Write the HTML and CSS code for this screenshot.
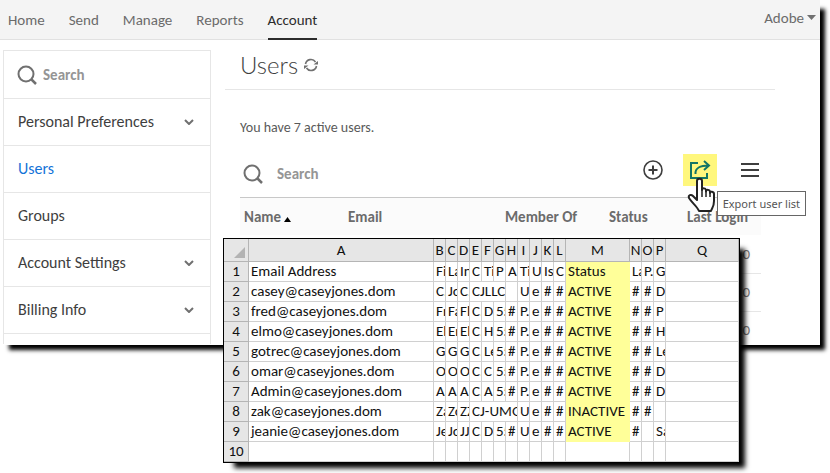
FILE: index.html
```html
<!DOCTYPE html>
<html lang="en">
<head>
<meta charset="utf-8">
<title>Users</title>
<link rel="stylesheet" href="styles.css">
</head>
<body>
<div class="window">
  <header class="topbar">
    <nav class="tabs">
      <a href="#">Home</a><a href="#">Send</a><a href="#">Manage</a><a href="#">Reports</a><a href="#" class="current">Account</a>
    </nav>
    <button class="profile">Adobe<svg width="10" height="6" viewBox="0 0 10 6"><path d="M0 0h9L4.500 5z" fill="#707070"/></svg></button>
  </header>
  <div class="body">
    <aside class="sidebar">
      <label class="side-search">
        <svg width="20" height="20" viewBox="0 0 20 20" fill="none" stroke="#707070" stroke-width="2"><circle cx="9" cy="9" r="7.500"/><path d="M14 14l5 5" stroke-width="2.500"/></svg>
        <input type="search" placeholder="Search" aria-label="Search menu">
      </label>
      <a href="#">Personal Preferences<svg class="chev" viewBox="0 0 10 6"><path d="M1 1l4 4 4-4"/></svg></a>
      <a href="#" class="selected">Users</a>
      <a href="#">Groups</a>
      <a href="#">Account Settings<svg class="chev" viewBox="0 0 10 6"><path d="M1 1l4 4 4-4"/></svg></a>
      <a href="#">Billing Info<svg class="chev" viewBox="0 0 10 6"><path d="M1 1l4 4 4-4"/></svg></a>
    </aside>
    <main class="content">
      <div class="title">
        <h1>Users</h1>
        <button aria-label="Refresh"><svg width="14" height="14" viewBox="0 0 14 14"><g fill="none" stroke="#707070" stroke-width="1.600"><path d="M1.500 6A5.500 5.500 0 0 1 11.500 4"/><path d="M12.500 8A5.500 5.500 0 0 1 2.500 10"/></g><path d="M9.500 6.500h4.500V3zM0 11V7.500h4.500z" fill="#707070"/></svg></button>
      </div>
      <div class="panel">
        <p class="summary">You have 7 active users.</p>
        <div class="toolbar">
          <label class="user-search">
            <svg width="20" height="20" viewBox="0 0 20 20" fill="none" stroke="#707070" stroke-width="2"><circle cx="9" cy="9" r="7.500"/><path d="M14 14l5 5" stroke-width="2.500"/></svg>
            <input type="search" placeholder="Search" aria-label="Search users">
          </label>
          <button aria-label="Add user"><svg width="20" height="20" viewBox="0 0 20 20" fill="none" stroke="#3e3e3e" stroke-width="1.600"><circle cx="10" cy="10" r="9"/><path d="M10 5.500v9M5.500 10h9" stroke-width="2"/></svg></button>
          <button class="export" aria-label="Export user list"><svg width="22" height="20" viewBox="0 0 22 20" fill="none" stroke="#137565" stroke-width="2"><path d="M9 3H2v15h16v-5M6.500 14C6 8 11 5.500 20 5.500M15 1l5 4.500-5 4.500"/></svg></button>
          <button aria-label="More"><svg width="18" height="16" viewBox="0 0 18 16" stroke="#3e3e3e" stroke-width="2"><path d="M0 2h18M0 8h18M0 14h18"/></svg></button>
          <svg class="hand" viewBox="0 0 28 36"><path d="M10 20V4c0-3 5-3 5 0v9c0-2.500 4-2 4 .5v1c0-2.500 4-2 4 .5v1c0-2 4-1.500 4 1v7c0 6-2 7-3 10H12C10 29 5 26 2 21c-1-3 2-4 4-2l4 4z" fill="#fff" stroke="#222" stroke-width="2" stroke-linejoin="round"/><path d="M15 12v8M19 14v6M23 15v5" stroke="#222" stroke-width="1.500"/></svg>
          <div class="tooltip" role="tooltip">Export user list</div>
        </div>
        <table class="users">
          <colgroup><col class="c-name"><col class="c-email"><col class="c-member"><col class="c-status"><col></colgroup>
          <thead><tr><th>Name <svg width="7" height="5" viewBox="0 0 7 5"><path d="M0 5L3.500 0 7 5z"/></svg></th><th>Email</th><th>Member Of</th><th>Status</th><th>Last Login</th></tr></thead>
          <tbody>
            <tr><td></td><td></td><td></td><td></td><td>0</td></tr>
            <tr><td></td><td></td><td></td><td></td><td>0</td></tr>
            <tr><td></td><td></td><td></td><td></td><td>0</td></tr>
          </tbody>
        </table>
      </div>
    </main>
  </div>
</div>

<div class="sheet">
<table>
<colgroup><col class="rownum"><col class="wide"><col span="11" class="thin"><col class="state"><col span="3" class="thin"><col></colgroup>
<thead><tr><th><svg width="11" height="11" viewBox="0 0 11 11"><path d="M11 0v11H0z" fill="#b3b3b3"/></svg></th><th>A</th><th>B</th><th>C</th><th>D</th><th>E</th><th>F</th><th>G</th><th>H</th><th>I</th><th>J</th><th>K</th><th>L</th><th>M</th><th>N</th><th>O</th><th>P</th><th>Q</th></tr></thead>
<tbody>
<tr><th>1</th><td>Email Address</td><td>Fi</td><td>La</td><td>In</td><td>C</td><td>Ti</td><td>P</td><td>A</td><td>Ti</td><td>U</td><td>Is</td><td>C</td><td class="hl">Status</td><td>La</td><td>P.</td><td>G</td><td></td></tr>
<tr><th>2</th><td>casey@caseyjones.dom</td><td>C.</td><td>Jo</td><td>C.</td><td colspan="3">CJLLC</td><td></td><td>U</td><td>e</td><td>#</td><td>#</td><td class="hl">ACTIVE</td><td>#</td><td>#</td><td>D</td><td></td></tr>
<tr><th>3</th><td>fred@caseyjones.dom</td><td>Fr</td><td>Fa</td><td>Fl</td><td>C.</td><td>D</td><td>55</td><td>#</td><td>P.</td><td>e</td><td>#</td><td>#</td><td class="hl">ACTIVE</td><td>#</td><td>#</td><td>P</td><td></td></tr>
<tr><th>4</th><td>elmo@caseyjones.dom</td><td>El</td><td>Er</td><td>El</td><td>C.</td><td>H</td><td>55</td><td>#</td><td>P.</td><td>e</td><td>#</td><td>#</td><td class="hl">ACTIVE</td><td>#</td><td>#</td><td>H</td><td></td></tr>
<tr><th>5</th><td>gotrec@caseyjones.dom</td><td>G</td><td>G</td><td>G</td><td>C.</td><td>Le</td><td>55</td><td>#</td><td>P.</td><td>e</td><td>#</td><td>#</td><td class="hl">ACTIVE</td><td>#</td><td>#</td><td>Le</td><td></td></tr>
<tr><th>6</th><td>omar@caseyjones.dom</td><td>O</td><td>O</td><td>O</td><td>C.</td><td>C</td><td>55</td><td>#</td><td>P.</td><td>e</td><td>#</td><td>#</td><td class="hl">ACTIVE</td><td>#</td><td>#</td><td>D</td><td></td></tr>
<tr><th>7</th><td>Admin@caseyjones.dom</td><td>A</td><td>A</td><td>A</td><td>C.</td><td>A</td><td>55</td><td>#</td><td>P.</td><td>e</td><td>#</td><td>#</td><td class="hl">ACTIVE</td><td>#</td><td>#</td><td>D</td><td></td></tr>
<tr><th>8</th><td>zak@caseyjones.dom</td><td>Za</td><td>Zo</td><td>ZZ</td><td colspan="4">CJ-UMG</td><td>U</td><td>e</td><td>#</td><td>#</td><td class="hl">INACTIVE</td><td>#</td><td>#</td><td></td><td></td></tr>
<tr><th>9</th><td>jeanie@caseyjones.dom</td><td>Je</td><td>Jo</td><td>JJ</td><td>C.</td><td>D</td><td>55</td><td>#</td><td>U</td><td>e</td><td>#</td><td>#</td><td class="hl">ACTIVE</td><td>#</td><td></td><td>Sa</td><td></td></tr>
<tr><th>10</th><td></td><td></td><td></td><td></td><td></td><td></td><td></td><td></td><td></td><td></td><td></td><td></td><td></td><td></td><td></td><td></td><td></td></tr>
</tbody>
</table>
</div>
</body>
</html>
```
FILE: styles.css
```css
* { box-sizing: border-box; }
body {
  margin: 0;
  min-height: 100vh;
  overflow: hidden;
  position: relative;
  background: #fff;
  color: #3e3e3e;
  font: 16px/20px Carlito, Lato, sans-serif;
}
a { color: inherit; text-decoration: none; }
button { border: 0; padding: 0; background: none; font: inherit; color: inherit; display: flex; align-items: center; }
svg { flex: none; }
input {
  border: 0; padding: 0; outline: 0; background: none;
  width: 100%; min-width: 0;
  font: bold 15px/20px Carlito, Lato, sans-serif;
}
input::placeholder { color: #959595; opacity: 1; }

.window {
  margin-right: 10px;
  background: #fff;
  box-shadow: 7px 7px 4px -2px #000;
}
.topbar {
  display: flex;
  justify-content: space-between;
  height: 40px;
  padding: 0 3px 0 8px;
  background: #f4f4f4;
  border-bottom: 1px solid #e1e1e1;
  color: #6b6b6b;
  font-size: 15px;
}
.tabs { display: flex; gap: 24px; }
.tabs a { padding-top: 10px; height: 40px; }
.tabs .current { color: #2c2c2c; border-bottom: 2px solid #2c2c2c; }
.profile { height: 36px; gap: 3px; }

.body { display: flex; align-items: flex-start; height: 305px; overflow: hidden; }
.sidebar {
  width: 208px;
  flex: none;
  margin: 10px 0 0 3px;
  padding-bottom: 10px;
  border: 1px solid #e6e6e6;
  border-bottom: 0;
}
.side-search, .sidebar a {
  display: flex;
  align-items: center;
  height: 47px;
  padding: 0 16px 0 14px;
  border-bottom: 1px solid #e6e6e6;
}
.side-search { height: 48px; gap: 6px; padding-left: 13px; }
.sidebar a { justify-content: space-between; }
.sidebar .selected { color: #1473d8; }
.chev { width: 10px; height: 6px; fill: none; stroke: #707070; stroke-width: 2; }

.content { flex: 1; min-width: 0; margin: 0 45px 0 14px; }
.title {
  display: flex;
  align-items: center;
  gap: 6px;
  height: 50px;
  padding-left: 15px;
  border-bottom: 1px solid #e6e6e6;
}
.title h1 { margin: 0; font: 300 24px/30px Lato, sans-serif; }
.panel { margin: 0 14px 0 15px; }
.summary { margin: 0; padding: 28px 0 12px; font-size: 14px; color: #5a5a5a; }
.toolbar {
  position: relative;
  display: flex;
  align-items: center;
  height: 48px;
  padding-right: 2px;
  gap: 20px;
  border-bottom: 1px solid #c8c8c8;
}
.user-search { flex: 1; display: flex; align-items: center; gap: 14px; padding-left: 3px; }
.toolbar > button { height: 32px; margin-bottom: 8px; }
.toolbar .export { width: 34px; justify-content: center; background: #fff77d; }
.toolbar button:last-of-type { margin-left: 4px; }
.hand { position: absolute; z-index: 2; right: 46px; top: 27px; width: 28px; height: 36px; }
.tooltip {
  position: absolute;
  z-index: 1;
  right: -45px;
  top: 41px;
  padding: 1px 5px;
  border: 1px solid #666;
  background: #fff;
  color: #555;
  font: 11px/21px "Noto Sans", sans-serif;
  white-space: nowrap;
}
.users { width: 100%; table-layout: fixed; border-collapse: collapse; font-size: 15px; }
.users .c-name { width: 104px; }
.users .c-email { width: 157px; }
.users .c-member { width: 104px; }
.users .c-status { width: 78px; }
.users th { height: 37px; padding: 0 4px; background: #fbfbfb; color: #6b6b6b; text-align: left; white-space: nowrap; }
.users td { height: 38px; padding: 0 11px; border-bottom: 1px solid #e6e6e6; color: #777; text-align: right; }

.sheet {
  position: absolute;
  z-index: 3;
  left: 223px;
  top: 238px;
  width: 517px;
  border: 1px solid #000;
  background: #fff;
  box-shadow: 8px 8px 5px -3px #000;
  color: #111;
}
.sheet table { width: 100%; table-layout: fixed; border-collapse: separate; border-spacing: 0; font: 15px/19px Carlito, Lato, sans-serif; }
.sheet .rownum { width: 25px; }
.sheet .wide { width: 185px; }
.sheet .thin { width: 12px; }
.sheet .state { width: 64px; }
.sheet th {
  padding: 0;
  font-weight: normal;
  text-align: center;
  background: #e6e6e6;
  border-right: 1px solid #b5b5b5;
  border-bottom: 1px solid #b5b5b5;
}
.sheet thead th { height: 23px; }
.sheet th svg { display: block; margin: 4px 0 0 10px; }
.sheet td {
  height: 20px;
  padding: 0 0 0 2px;
  overflow: hidden;
  white-space: nowrap;
  border-right: 1px solid #d0d0d0;
  border-bottom: 1px solid #d0d0d0;
}
.sheet .hl { background: #ffff99; border-color: #ffff99; }
```
